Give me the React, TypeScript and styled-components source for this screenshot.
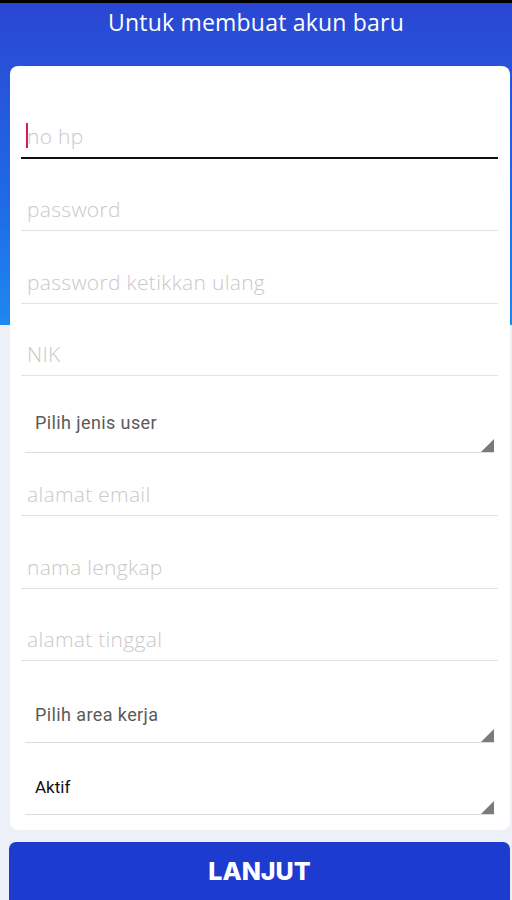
import React from 'react'
import styled, { createGlobalStyle } from 'styled-components'

const GlobalStyle = createGlobalStyle`
  html, body {
    margin: 0;
    padding: 0;
  }
  body {
    font-family: 'Open Sans', 'Liberation Sans', sans-serif;
  }
`

const Page = styled.div`
  width: 512px;
  height: 900px;
  overflow: hidden;
  display: flex;
  flex-direction: column;
  background: linear-gradient(to bottom, #2a46d2 0px, #1f6ae6 200px, #1e88f0 325px, #eef0f8 325px);

  & > * {
    flex-shrink: 0;
  }
`

const StatusStrip = styled.div`
  height: 3px;
  background: #000;
`

const Title = styled.h1`
  margin: 0;
  height: 63px;
  padding-top: 4px;
  box-sizing: border-box;
  text-align: center;
  color: #fff;
  font-family: 'Open Sans', sans-serif;
  font-weight: 400;
  font-size: 23px;
  line-height: 30px;
  letter-spacing: 0.2px;
`

const Card = styled.div`
  margin: 0 2px 0 10px;
  height: 764px;
  padding: 21px 0 15px;
  box-sizing: border-box;
  background: #fff;
  border-radius: 8px;
  display: flex;
  flex-direction: column;
`

const TextRow = styled.div<{ h: number; focused?: boolean }>`
  height: ${(p) => p.h}px;
  margin: 0 12px 0 11px;
  box-sizing: border-box;
  display: flex;
  align-items: flex-end;
  padding: 0 0 10px 6px;
  border-bottom: ${(p) => (p.focused ? '2px solid #111' : '1px solid #e2e2e2')};
  position: relative;
`

const Placeholder = styled.span`
  font-family: 'Open Sans', sans-serif;
  font-weight: 300;
  font-size: 21px;
  line-height: 22px;
  letter-spacing: 0.3px;
  color: #c9c9c9;
`

const Caret = styled.span`
  position: absolute;
  left: 5px;
  bottom: 9px;
  width: 2px;
  height: 25px;
  background: #d81b60;
`

const SelectRow = styled.div<{ h: number; gap: number }>`
  height: ${(p) => p.h}px;
  margin: 0 16px 0 15px;
  box-sizing: border-box;
  display: flex;
  align-items: flex-end;
  padding: 0 0 ${(p) => p.gap}px 10px;
  border-bottom: 1px solid #dcdcdc;
  position: relative;
`

const SelectText = styled.span<{ dark?: boolean }>`
  font-family: Roboto, 'Noto Sans', sans-serif;
  font-size: ${(p) => (p.dark ? 17 : 18)}px;
  line-height: 20px;
  letter-spacing: ${(p) => (p.dark ? 0 : 0.4)}px;
  color: ${(p) => (p.dark ? '#111' : '#5a5a5a')};
`

const Arrow = styled.span`
  position: absolute;
  right: 0;
  bottom: 0;
  width: 0;
  height: 0;
  border-left: 13px solid transparent;
  border-bottom: 13px solid #7a7a7a;
`

const Button = styled.button`
  margin: 12px 2px 0 9px;
  height: 64px;
  border: none;
  border-radius: 7px;
  background: #1e3bd0;
  color: #fff;
  font-family: Inter, 'Liberation Sans', sans-serif;
  font-weight: 800;
  font-size: 25px;
  padding: 0 0 6px;
  text-align: center;
`

const textFields = [
  { label: 'no hp', h: 72, focused: true },
  { label: 'password', h: 72 },
  { label: 'password ketikkan ulang', h: 73 },
  { label: 'NIK', h: 72 },
]

const moreFields = [
  { label: 'alamat email', h: 63 },
  { label: 'nama lengkap', h: 73 },
  { label: 'alamat tinggal', h: 72 },
]

export default function App() {
  return (
    <Page>
      <GlobalStyle />
      <StatusStrip />
      <Title>Untuk membuat akun baru</Title>
      <Card>
        {textFields.map((f) => (
          <TextRow key={f.label} h={f.h} focused={f.focused}>
            {f.focused && <Caret />}
            <Placeholder>{f.label}</Placeholder>
          </TextRow>
        ))}
        <SelectRow h={77} gap={19}>
          <SelectText>Pilih jenis user</SelectText>
          <Arrow />
        </SelectRow>
        {moreFields.map((f) => (
          <TextRow key={f.label} h={f.h}>
            <Placeholder>{f.label}</Placeholder>
          </TextRow>
        ))}
        <SelectRow h={82} gap={17}>
          <SelectText>Pilih area kerja</SelectText>
          <Arrow />
        </SelectRow>
        <SelectRow h={72} gap={17}>
          <SelectText dark>Aktif</SelectText>
          <Arrow />
        </SelectRow>
      </Card>
      <Button>LANJUT</Button>
    </Page>
  )
}
